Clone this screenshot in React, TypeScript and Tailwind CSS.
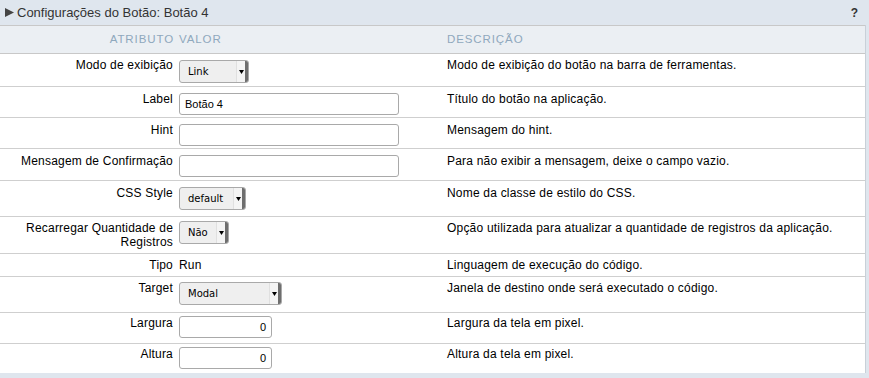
import React from "react";

const F = { fontFamily: '"Liberation Sans", Arial, sans-serif' };

function Select({ text, w }: { text: string; w: string }) {
  return (
    <div
      className={`${w} h-[23px] flex items-stretch bg-[#efefef] border border-[#a9a9a9] rounded-[3px] overflow-hidden`}
    >
      <div
        className="flex-1 flex items-center pl-[8px] text-[10px] text-black"
        style={{ fontFamily: '"DejaVu Sans", Verdana, sans-serif' }}
      >
        {text}
      </div>
      <div className="w-[9px] flex items-center justify-center bg-[#f4f4f4] border-l border-[#e0e0e0]">
        <svg width="5" height="4" viewBox="0 0 5 4">
          <polygon points="0,0 5,0 2.5,4" fill="#000" />
        </svg>
      </div>
      <div className="w-[3px] bg-[#6e6e6e]" />
    </div>
  );
}

function Input({ value, w, right }: { value?: string; w: string; right?: boolean }) {
  return (
    <div
      className={`${w} h-[22px] flex items-center border border-[#a9a9a9] rounded-[3px] bg-white px-[5px] text-[11px] text-black ${
        right ? "justify-end" : ""
      }`}
    >
      {value}
    </div>
  );
}

type Row = {
  label: React.ReactNode;
  h: string;
  tt: string;
  ct: string;
  ctrl: React.ReactNode;
  desc: string;
  last?: boolean;
};

const rows: Row[] = [
  { label: "Modo de exibição", h: "h-[32px]", tt: "pt-[4px]", ct: "pt-[6px]", ctrl: <Select text="Link" w="w-[70px]" />, desc: "Modo de exibição do botão na barra de ferramentas." },
  { label: "Label", h: "h-[30px]", tt: "pt-[5px]", ct: "pt-[6px]", ctrl: <Input value="Botão 4" w="w-[220px]" />, desc: "Título do botão na aplicação." },
  { label: "Hint", h: "h-[30px]", tt: "pt-[5px]", ct: "pt-[6px]", ctrl: <Input w="w-[220px]" />, desc: "Mensagem do hint." },
  { label: "Mensagem de Confirmação", h: "h-[31px]", tt: "pt-[5px]", ct: "pt-[6px]", ctrl: <Input w="w-[220px]" />, desc: "Para não exibir a mensagem, deixe o campo vazio." },
  { label: "CSS Style", h: "h-[35px]", tt: "pt-[5px]", ct: "pt-[6px]", ctrl: <Select text="default" w="w-[67px]" />, desc: "Nome da classe de estilo do CSS." },
  { label: (<>Recarregar Quantidade de<br />Registros</>), h: "h-[36px]", tt: "pt-[4px]", ct: "pt-[4px]", ctrl: <Select text="Não" w="w-[50px]" />, desc: "Opção utilizada para atualizar a quantidade de registros da aplicação." },
  { label: "Tipo", h: "h-[22px]", tt: "pt-[4px]", ct: "pt-[4px]", ctrl: <span className="text-[12px] tracking-[0.2px] leading-[14px] block">Run</span>, desc: "Linguagem de execução do código." },
  { label: "Target", h: "h-[35px]", tt: "pt-[4px]", ct: "pt-[5px]", ctrl: <Select text="Modal" w="w-[103px]" />, desc: "Janela de destino onde será executado o código." },
  { label: "Largura", h: "h-[30px]", tt: "pt-[3px]", ct: "pt-[3px]", ctrl: <Input value="0" w="w-[93px]" right />, desc: "Largura da tela em pixel." },
  { label: "Altura", h: "h-[29px]", tt: "pt-[3px]", ct: "pt-[3px]", ctrl: <Input value="0" w="w-[93px]" right />, desc: "Altura da tela em pixel.", last: true },
];

export default function App() {
  return (
    <div className="w-[869px] h-[378px] bg-[#dfe6ee] overflow-hidden text-black" style={F}>
      <div className="h-[25px] flex items-center pl-[5px] pr-[11px] text-[13px] text-[#333]">
        <svg width="9" height="9" viewBox="0 0 9 9" className="mr-[3px]">
          <polygon points="0,0 9,4.5 0,9" fill="#444" />
        </svg>
        <span>Configurações do Botão: Botão 4</span>
        <span className="ml-auto font-bold text-[12px] text-[#333]">?</span>
      </div>
      <div className="w-[866px] bg-white border-r border-[#c9d0d8]">
        <div className="h-[29px] flex items-center bg-[#ebeff3] border-y border-[#c8c8c8] text-[11.5px] tracking-[0.9px] text-[#8fa8bd]">
          <div className="w-[176px] pr-[2px] text-right">ATRIBUTO</div>
          <div className="w-[268px] pl-[3px]">VALOR</div>
          <div className="flex-1 pl-[3px]">DESCRIÇÃO</div>
        </div>
        {rows.map((r, i) => (
          <div
            key={i}
            className={`flex ${r.h} ${r.last ? "" : "border-b border-[#cfcfcf]"} box-content text-[12px] tracking-[0.2px] leading-[14px]`}
          >
            <div className={`w-[176px] pr-[3px] text-right ${r.tt}`}>{r.label}</div>
            <div className={`w-[268px] pl-[3px] ${r.ct} tracking-normal`}>{r.ctrl}</div>
            <div className={`flex-1 pl-[3px] ${r.tt}`}>{r.desc}</div>
          </div>
        ))}
      </div>
    </div>
  );
}
